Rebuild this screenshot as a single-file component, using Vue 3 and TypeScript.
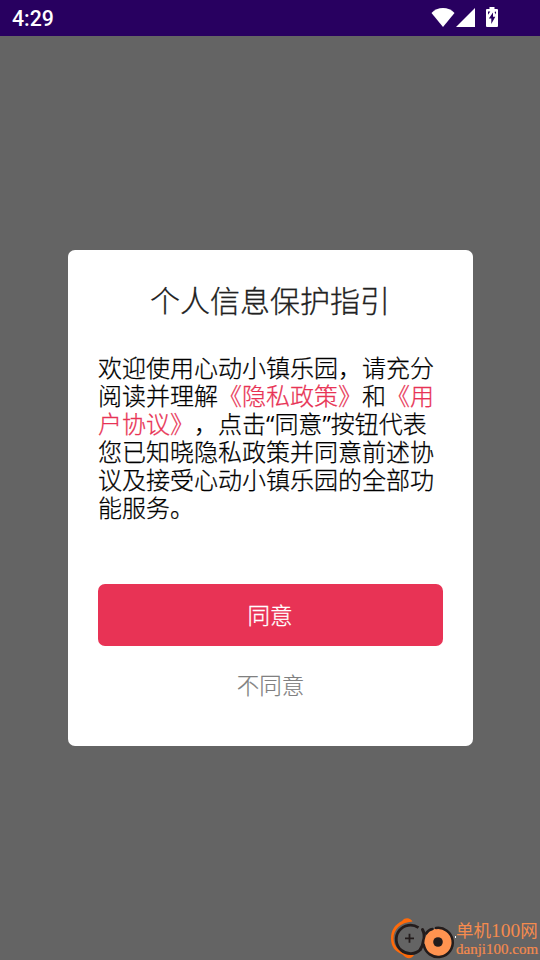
<script setup lang="ts">
const title = '个人信息保护指引'
const time = '4:29'
</script>

<template>
  <main class="screen">
    <header class="status">
      <span class="time">{{ time }}</span>
      <div class="icons">
        <svg class="wifi" width="24" height="20" viewBox="0 0 24 20">
          <path d="M12 20 0.500 6C3.500 2.800 7.500 1 12 1s8.500 1.800 11.500 5Z" fill="#fff" />
        </svg>
        <svg class="signal" width="19" height="20" viewBox="0 0 19 20">
          <path d="M0 20 19 1V20Z" fill="#fff" />
        </svg>
        <svg class="battery" width="12" height="20" viewBox="0 0 12 20">
          <path d="M3.500 0h5v2H11a1 1 0 0 1 1 1v16a1 1 0 0 1-1 1H1a1 1 0 0 1-1-1V3a1 1 0 0 1 1-1h2.500Z" fill="#fff" />
          <path d="M7 5.500v4.300h2.300L5.300 17v-5.500H2.800ZM2 4.500h2.300L2 7.800ZM10 4.500v3L8.500 5Z" fill="#280060" />
        </svg>
      </div>
    </header>

    <section class="stage">
      <article class="dialog">
        <h1>{{ title }}</h1>
        <p class="copy">欢迎使用心动小镇乐园，请充分阅读并理解<a>《隐私政策》</a>和<a>《用户协议》</a>，点击<span class="quote">“</span>同意<span class="quote">”</span>按钮代表您已知晓隐私政策并同意前述协议及接受心动小镇乐园的全部功能服务。</p>
        <button class="agree" type="button">同意</button>
        <button class="decline" type="button">不同意</button>
      </article>
    </section>

    <aside class="mark">
      <svg width="68" height="44" viewBox="0 0 68 44">
        <path d="M24.500 5.500C23 2.500 17.500 0.500 14 5C6.500 8.500 3 15 3 22.500c0 8 4 13 11.500 16c4 5 9.500 4.500 11.500 0.500C12 37.500 5.500 31 5.500 22.500C5.500 13.500 12 6.500 24.500 5.500Z" fill="#ff6a0a" />
        <path d="M30.500 11.700a14.200 14.200 0 1 0 2.200 21.500" fill="none" stroke="#231c1c" stroke-width="2.800" />
        <path d="M34.500 13.500c1.500 3 2.500 6.500 1 11c-.5 4-1 6-3 8.500" fill="none" stroke="#231c1c" stroke-width="3" stroke-linecap="round" />
        <path d="M17 22.300h9M21.500 17.800v9" stroke="#231c1c" stroke-width="1.800" />
        <circle cx="50.500" cy="26.500" r="14" fill="#ff9350" />
        <path d="M48 12a14.600 14.600 0 1 1-12.200 17M38 17.500c1.500-2.500 3.500-4 6.500-4.500" fill="none" stroke="#231c1c" stroke-width="2.500" stroke-linecap="round" />
        <circle cx="50" cy="26" r="4.800" fill="#231c1c" />
        <rect x="67" y="20" width="1" height="2" fill="#fff" />
      </svg>
      <div class="mark-text">
        <span class="mark-name">单机<b>100</b>网</span>
        <span class="mark-url">danji100.com</span>
      </div>
    </aside>
  </main>
</template>

<style>
body {
  margin: 0;
  background: #646464;
}
</style>

<style scoped>
.screen {
  position: relative;
  display: flex;
  flex-direction: column;
  width: 540px;
  height: 960px;
  overflow: hidden;
  background: #646464;
  font-family: "Noto Sans", "Noto Sans CJK SC", sans-serif;
  text-spacing-trim: space-all;
}
.status {
  display: flex;
  align-items: center;
  justify-content: space-between;
  box-sizing: border-box;
  height: 36px;
  padding: 0 42px 0 12px;
  background: #280060;
  color: #fff;
}
.time {
  padding-top: 2px;
  font-family: Roboto, sans-serif;
  font-size: 21.300px;
  font-weight: 500;
  line-height: 34px;
}
.icons {
  display: flex;
  padding-bottom: 2px;
}
.signal {
  margin-left: 1px;
}
.battery {
  margin-left: 11px;
}
.stage {
  flex: 1;
  display: flex;
  justify-content: center;
  align-items: flex-start;
  padding: 214px 0 0 1px;
}
.dialog {
  display: flex;
  flex-direction: column;
  box-sizing: border-box;
  width: 405px;
  height: 496px;
  padding: 31px 30px 30px;
  border-radius: 7px;
  background: #fff;
}
h1 {
  margin: 0 0 33px;
  padding-right: 1px;
  color: #212121;
  font-size: 30px;
  font-weight: 300;
  line-height: 40px;
  text-align: center;
  -webkit-text-stroke: 0.300px currentColor;
}
.copy {
  margin: 0 0 62px;
  color: #000;
  font-size: 24px;
  line-height: 28px;
  font-weight: 300;
  -webkit-text-stroke: 0.250px currentColor;
}
.copy a {
  color: #e83355;
}
.quote {
  font-family: "Open Sans", sans-serif;
  font-weight: 400;
  -webkit-text-stroke: 0;
}
button {
  flex: none;
  border: 0;
  font-family: inherit;
  font-size: 22.500px;
  font-weight: 300;
  -webkit-text-stroke: 0.300px currentColor;
}
.agree {
  height: 62px;
  padding: 0 1px 1px 0;
  border-radius: 7px;
  background: #e83355;
  color: #fff;
}
.decline {
  height: 80px;
  padding: 0 0 3px;
  background: none;
  color: #808080;
  -webkit-text-stroke-width: 0.200px;
}
.mark {
  position: absolute;
  right: 0;
  bottom: 0;
  display: flex;
  width: 152px;
  height: 44px;
}
.mark svg {
  flex: none;
}
.mark-text {
  display: flex;
  flex-direction: column;
  color: #f58b4e;
  white-space: nowrap;
}
.mark-name {
  height: 27px;
  font-family: "Noto Sans CJK SC", sans-serif;
  font-size: 17.500px;
  font-weight: 400;
  line-height: 27px;
}
.mark-name b {
  font-family: "Liberation Serif", serif;
  font-size: 19.500px;
  font-weight: 400;
}
.mark-url {
  font-family: "Liberation Serif", serif;
  font-size: 15px;
  line-height: 12px;
  -webkit-text-stroke: 0.200px currentColor;
}
</style>
